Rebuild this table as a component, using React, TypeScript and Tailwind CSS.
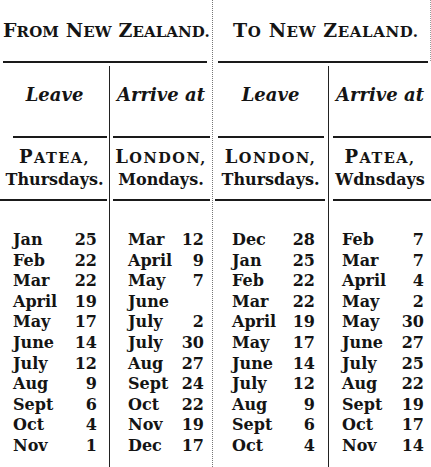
import React from "react";

type Row = [string, string];

const col1: Row[] = [
  ["Jan", "25"], ["Feb", "22"], ["Mar", "22"], ["April", "19"], ["May", "17"], ["June", "14"],
  ["July", "12"], ["Aug", "9"], ["Sept", "6"], ["Oct", "4"], ["Nov", "1"],
];
const col2: Row[] = [
  ["Mar", "12"], ["April", "9"], ["May", "7"], ["June", ""], ["July", "2"], ["July", "30"],
  ["Aug", "27"], ["Sept", "24"], ["Oct", "22"], ["Nov", "19"], ["Dec", "17"],
];
const col3: Row[] = [
  ["Dec", "28"], ["Jan", "25"], ["Feb", "22"], ["Mar", "22"], ["April", "19"], ["May", "17"],
  ["June", "14"], ["July", "12"], ["Aug", "9"], ["Sept", "6"], ["Oct", "4"],
];
const col4: Row[] = [
  ["Feb", "7"], ["Mar", "7"], ["April", "4"], ["May", "2"], ["May", "30"], ["June", "27"],
  ["July", "25"], ["Aug", "22"], ["Sept", "19"], ["Oct", "17"], ["Nov", "14"],
];

function SmallCaps({ text, small }: { text: string; small: string }) {
  const words = text.split(" ");
  return (
    <span className="whitespace-nowrap">
      {words.map((w, i) => (
        <React.Fragment key={i}>
          {i > 0 ? " " : ""}
          <span>{w[0]}</span>
          <span className={small}>{w.slice(1).toUpperCase()}</span>
        </React.Fragment>
      ))}
    </span>
  );
}

function Rows({ rows, pad }: { rows: Row[]; pad: string }) {
  return (
    <div className={`flex flex-col pt-[29px] ${pad}`}>
      {rows.map(([m, d], i) => (
        <div key={i} className="flex justify-between h-[20.6px] leading-[20.6px]">
          <span>{m}</span>
          <span>{d}</span>
        </div>
      ))}
    </div>
  );
}

function Column({
  head,
  city,
  day,
  rows,
  pad,
  line1,
  line2,
  border,
  width,
}: {
  head: string;
  city: string;
  day: string;
  rows: Row[];
  pad: string;
  line1: string;
  line2: string;
  border: boolean;
  width: string;
}) {
  return (
    <div className={`${width} flex flex-col ${border ? "border-r border-[#222]" : ""}`}>
      <div className="h-[70px] pt-[18px] text-center italic text-[18px] leading-[22px] whitespace-nowrap">
        {head}
      </div>
      <div className={`h-[2px] bg-[#1a1a1a] ${line1}`} />
      <div className="h-[61px] pt-[8px] flex flex-col items-center text-[16px] leading-[22px] whitespace-nowrap">
        <span className="text-[18px] tracking-[1.5px]">
          <SmallCaps text={city} small="text-[14.5px]" />
        </span>
        <span>{day}</span>
      </div>
      <div className={`h-[2px] bg-[#1a1a1a] ${line2}`} />
      <Rows rows={rows} pad={pad} />
    </div>
  );
}

export default function App() {
  return (
    <div className="w-[431px] h-[467px] bg-white text-[#141414] overflow-hidden flex font-['DejaVu_Serif',serif] font-bold text-[16px]">
      <div className="w-[213px] flex flex-col border-r border-dotted border-[#777]">
        <div className="h-[61px] pt-[18px] pl-[3px] text-[19px] leading-[24px] tracking-[0.1px] whitespace-nowrap">
          <SmallCaps text="From New Zealand." small="text-[15px]" />
        </div>
        <div className="h-[2px] bg-[#1a1a1a] ml-[3px] mr-[5px]" />
        <div className="flex pt-[3px] flex-1">
          <Column
            head="Leave"
            city="Patea,"
            day="Thursdays."
            rows={col1}
            pad="pl-[13px] pr-[12px]"
            line1="ml-[13px] mr-[2px]"
            line2="ml-0 mr-[2px]"
            border
            width="w-[110px]"
          />
          <Column
            head="Arrive at"
            city="London,"
            day="Mondays."
            rows={col2}
            pad="pl-[18px] pr-[8px]"
            line1="ml-[3px] mr-[2px]"
            line2="ml-[3px] mr-[2px]"
            border={false}
            width="w-[102px]"
          />
        </div>
      </div>
      <div className="w-[218px] flex flex-col">
        <div className="h-[61px] pt-[18px] pl-[20px] text-[19px] leading-[24px] tracking-[0.6px] whitespace-nowrap border-r border-dotted border-[#999]">
          <SmallCaps text="To New Zealand." small="text-[15px]" />
        </div>
        <div className="h-[2px] bg-[#1a1a1a] ml-[5px] mr-[3px]" />
        <div className="flex pt-[3px] flex-1">
          <Column
            head="Leave"
            city="London,"
            day="Thursdays."
            rows={col3}
            pad="pl-[19px] pr-[13px]"
            line1="ml-[5px] mr-[4px]"
            line2="ml-[2px] mr-[3px]"
            border
            width="w-[116px]"
          />
          <Column
            head="Arrive at"
            city="Patea,"
            day="Wdnsdays"
            rows={col4}
            pad="pl-[13px] pr-[7px]"
            line1="ml-[4px] mr-0"
            line2="ml-[4px] mr-0"
            border={false}
            width="w-[102px]"
          />
        </div>
      </div>
    </div>
  );
}
